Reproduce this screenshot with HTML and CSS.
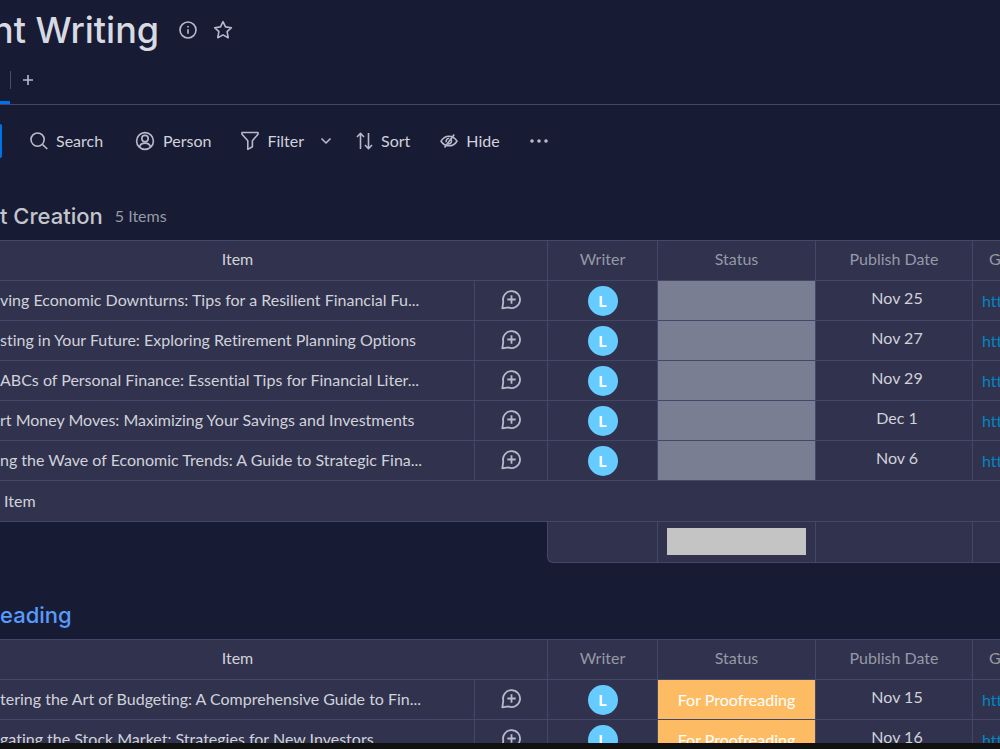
FILE: index.html
```
<!DOCTYPE html>
<html lang="en">
<head>
    <meta charset="UTF-8">
    <meta name="viewport" content="width=device-width, initial-scale=1.0">
    <title>Content Writing</title>
    <link rel="stylesheet" href="styles.css">
</head>
<body>
    <!-- Shared icons -->
    <svg class="sprite" aria-hidden="true">
        <symbol id="chat" viewBox="0 0 22 22">
            <path d="M2.300 19.300L3.300 12.600A8.500 8.500 0 1 1 8.300 18.400z" />
            <path d="M11.500 6.300v8.400M7.300 10.500h8.400" />
        </symbol>
    </svg>

    <main class="board">
        <header class="board-header">
            <h1>nt Writing</h1>
            <button class="icon-btn" aria-label="Board info">
                <svg width="18" height="18" viewBox="0 0 18 18"><circle cx="9" cy="9" r="8" /><path d="M9 8.2v4.6M9 5v1.4" /></svg>
            </button>
            <button class="icon-btn" aria-label="Add to favorites">
                <svg width="20" height="20" viewBox="0 0 20 20"><path d="M10 1.6l2.5 5.3 5.9.8-4.3 4 1.1 6L10 14.9l-5.2 2.8 1.1-6-4.3-4 5.9-.8z" /></svg>
            </button>
        </header>

        <nav class="tabs">
            <a class="tab active" href="#" aria-label="Main table"></a>
            <button class="add-view" aria-label="Add view">
                <svg width="10" height="10" viewBox="0 0 10 10"><path d="M5 0v10M0 5h10" /></svg>
            </button>
        </nav>

        <div class="toolbar">
            <button class="new-item" aria-label="New item"></button>
            <button class="tool search">
                <svg width="18" height="18" viewBox="0 0 18 18"><circle cx="7.6" cy="7.6" r="6.6" /><path d="M12.3 12.3l5 4.7" /></svg>
                Search
            </button>
            <button class="tool">
                <svg width="20" height="20" viewBox="0 0 20 20"><circle cx="10" cy="10" r="8.4" /><circle cx="10" cy="7.6" r="3.2" /><path d="M4.4 16c.8-2.6 2.8-3.9 5.6-3.9s4.8 1.3 5.6 3.9" /></svg>
                Person
            </button>
            <button class="tool filter">
                <svg width="18" height="20" viewBox="0 0 18 20"><path d="M1 1.5h16v1.8l-5.6 6.4v6l-4.6 2.700V9.700L1 3.300z" /></svg>
                Filter
            </button>
            <button class="icon-btn" aria-label="Filter options">
                <svg width="12" height="8" viewBox="0 0 12 8"><path d="M1.5 1.5L6 6l4.5-4.5" /></svg>
            </button>
            <button class="tool sort">
                <svg width="17" height="18" viewBox="0 0 17 18"><path d="M4.5 17V1.5M1 5l3.5-3.7L8 5M12.5 1v15.5M9 13l3.5 3.7L16 13" /></svg>
                Sort
            </button>
            <button class="tool">
                <svg width="18" height="16" viewBox="0 0 18 16"><path d="M1 8.2C3 5 5.8 3.2 9 3.2s6 1.8 8 5c-2 3-4.8 4.6-8 4.6s-6-1.6-8-4.6zM4.5 14.5L14.2 1.5M10.8 5.9A3 3 0 0 1 8 10.9M6.3 9.3a3 3 0 0 1 2.900-4" /></svg>
                Hide
            </button>
            <button class="icon-btn" aria-label="More actions">
                <svg class="dots" width="18" height="4" viewBox="0 0 18 4"><circle cx="2" cy="2" r="1.8" /><circle cx="9" cy="2" r="1.8" /><circle cx="16" cy="2" r="1.8" /></svg>
            </button>
        </div>

        <section class="group">
            <div class="group-title">
                <h2>t Creation</h2>
                <span>5 Items</span>
            </div>
            <table>
                <colgroup>
                    <col><col class="col-chat"><col class="col-writer"><col class="col-status"><col class="col-date"><col class="col-link">
                </colgroup>
                <thead>
                    <tr>
                        <th class="item-head">Item</th>
                        <th class="chat-head"></th>
                        <th>Writer</th>
                        <th>Status</th>
                        <th>Publish Date</th>
                        <th class="link-head">G</th>
                    </tr>
                </thead>
                <tbody>
                    <tr>
                        <td class="name">ving Economic Downturns: Tips for a Resilient Financial Fu...</td>
                        <td class="updates"><button class="chat" aria-label="Add update"><svg><use href="#chat" /></svg></button></td>
                        <td><span class="avatar">L</span></td>
                        <td class="empty"></td>
                        <td class="date">Nov 25</td>
                        <td class="link"><a href="#">htt</a></td>
                    </tr>
                    <tr>
                        <td class="name">sting in Your Future: Exploring Retirement Planning Options</td>
                        <td class="updates"><button class="chat" aria-label="Add update"><svg><use href="#chat" /></svg></button></td>
                        <td><span class="avatar">L</span></td>
                        <td class="empty"></td>
                        <td class="date">Nov 27</td>
                        <td class="link"><a href="#">htt</a></td>
                    </tr>
                    <tr>
                        <td class="name">ABCs of Personal Finance: Essential Tips for Financial Liter...</td>
                        <td class="updates"><button class="chat" aria-label="Add update"><svg><use href="#chat" /></svg></button></td>
                        <td><span class="avatar">L</span></td>
                        <td class="empty"></td>
                        <td class="date">Nov 29</td>
                        <td class="link"><a href="#">htt</a></td>
                    </tr>
                    <tr>
                        <td class="name">rt Money Moves: Maximizing Your Savings and Investments</td>
                        <td class="updates"><button class="chat" aria-label="Add update"><svg><use href="#chat" /></svg></button></td>
                        <td><span class="avatar">L</span></td>
                        <td class="empty"></td>
                        <td class="date">Dec 1</td>
                        <td class="link"><a href="#">htt</a></td>
                    </tr>
                    <tr>
                        <td class="name">ng the Wave of Economic Trends: A Guide to Strategic Fina...</td>
                        <td class="updates"><button class="chat" aria-label="Add update"><svg><use href="#chat" /></svg></button></td>
                        <td><span class="avatar">L</span></td>
                        <td class="empty"></td>
                        <td class="date">Nov 6</td>
                        <td class="link"><a href="#">htt</a></td>
                    </tr>
                    <tr class="add-row">
                        <td colspan="6"><button class="add-item">Item</button></td>
                    </tr>
                </tbody>
            </table>
            <div class="summary">
                <div></div>
                <div class="summary-status"><span></span></div>
                <div></div>
                <div></div>
            </div>
        </section>

        <section class="group proofreading">
            <div class="group-title">
                <h2>eading</h2>
            </div>
            <table>
                <colgroup>
                    <col><col class="col-chat"><col class="col-writer"><col class="col-status"><col class="col-date"><col class="col-link">
                </colgroup>
                <thead>
                    <tr>
                        <th class="item-head">Item</th>
                        <th class="chat-head"></th>
                        <th>Writer</th>
                        <th>Status</th>
                        <th>Publish Date</th>
                        <th class="link-head">G</th>
                    </tr>
                </thead>
                <tbody>
                    <tr>
                        <td class="name">tering the Art of Budgeting: A Comprehensive Guide to Fin...</td>
                        <td class="updates"><button class="chat" aria-label="Add update"><svg><use href="#chat" /></svg></button></td>
                        <td><span class="avatar">L</span></td>
                        <td class="proof">For Proofreading</td>
                        <td class="date">Nov 15</td>
                        <td class="link"><a href="#">htt</a></td>
                    </tr>
                    <tr>
                        <td class="name">gating the Stock Market: Strategies for New Investors</td>
                        <td class="updates"><button class="chat" aria-label="Add update"><svg><use href="#chat" /></svg></button></td>
                        <td><span class="avatar">L</span></td>
                        <td class="proof">For Proofreading</td>
                        <td class="date">Nov 16</td>
                        <td class="link"><a href="#">htt</a></td>
                    </tr>
                </tbody>
            </table>
        </section>
    </main>
    <footer class="bottom-bar"></footer>
</body>
</html>
```
FILE: styles.css
```
* {
    margin: 0;
    padding: 0;
    box-sizing: border-box;
}

body {
    font-family: Lato, sans-serif;
    font-size: 16px;
    line-height: 20px;
    font-variant-ligatures: none;
    color: #d0d2da;
    background: #181b34;
    height: 100vh;
    display: flex;
    flex-direction: column;
    overflow: hidden;
}

button {
    font: inherit;
    font-variant-ligatures: none;
    color: inherit;
    background: none;
    border: none;
    cursor: pointer;
}

svg {
    display: block;
    fill: none;
    stroke: #b8bacb;
    stroke-width: 1.6;
    stroke-linejoin: round;
}

.sprite {
    position: absolute;
    width: 0;
    height: 0;
}

.board {
    flex: 1;
    min-height: 0;
    overflow: hidden;
}

.bottom-bar {
    height: 6px;
    background: #111111;
}

.board-header {
    display: flex;
    align-items: center;
    gap: 16px;
    height: 59px;
}

h1 {
    font-family: Inter, sans-serif;
    font-size: 36px;
    font-weight: 500;
    line-height: 60px;
    color: #d8dae2;
    margin-left: -8px;
    margin-right: 4px;
}

.tabs {
    display: flex;
    height: 46px;
    border-bottom: 1px solid #44466a;
}

.tab {
    width: 10px;
}

.tab.active {
    border-bottom: 3px solid #0073ea;
}

.add-view {
    height: 18px;
    margin-top: 12px;
    padding-left: 12px;
    border-left: 1px solid #4b4e69;
}

.toolbar {
    display: flex;
    align-items: center;
    height: 71px;
}

.new-item {
    width: 2px;
    height: 34px;
    margin-right: 28px;
    background: #0073ea;
    border-radius: 0 2px 2px 0;
}

.tool {
    display: flex;
    align-items: center;
    gap: 8px;
    margin-right: 30px;
}

.tool.search {
    margin-right: 32px;
}

.tool.filter {
    margin-right: 16px;
}

.tool.sort {
    margin-left: 24px;
}

.dots {
    fill: #b8bacb;
    stroke: none;
}

.group-title {
    display: flex;
    align-items: center;
    gap: 12px;
    height: 48px;
    margin-top: 16px;
    color: #9699a6;
}

h2 {
    font-family: Inter, sans-serif;
    font-size: 22px;
    font-weight: 500;
    line-height: 24px;
    color: #c3c6cc;
}

.proofreading h2 {
    color: #579bfc;
}

.proofreading .group-title {
    margin-top: 28px;
}

table {
    width: 100%;
    table-layout: fixed;
    border-collapse: separate;
    border-spacing: 0;
    background: #30324e;
    border-top: 1px solid #44466a;
}

.col-chat {
    width: 73px;
}

.col-writer {
    width: 110px;
}

.col-status {
    width: 158px;
}

.col-date {
    width: 157px;
}

.col-link {
    width: 27px;
}

th,
td {
    height: 40px;
    border-bottom: 1px solid #44466a;
    border-right: 1px solid #44466a;
    text-align: center;
    vertical-align: middle;
    white-space: nowrap;
    overflow: hidden;
}

th {
    padding-bottom: 4px;
    font-weight: 400;
    color: #9699a6;
}

th.item-head {
    color: #d0d2da;
    border-right: none;
}

th.link-head {
    padding-left: 16px;
    text-align: left;
}

td.name {
    padding-bottom: 2px;
    text-align: left;
}

td.updates {
    padding-bottom: 2px;
}

.chat {
    display: block;
    margin: 0 auto;
}

.chat svg {
    width: 22px;
    height: 22px;
    stroke-width: 1.8;
}

.avatar {
    display: block;
    width: 30px;
    height: 30px;
    margin: 0 auto;
    border-radius: 50%;
    background: #66ccff;
    color: #ffffff;
    font-weight: 700;
    line-height: 30px;
}

td.empty {
    background: #797e93;
}

td.proof {
    background: #fdbc64;
    color: #ffffff;
}

td.date {
    padding: 0 0 6px 6px;
}

td.link {
    padding-left: 9px;
    text-align: left;
}

td:last-child,
th:last-child {
    border-right: none;
}

td.link a {
    color: #0086c0;
    text-decoration: none;
}

.add-row td {
    height: 41px;
    text-align: left;
}

.add-item {
    padding-left: 4px;
}

.summary {
    display: grid;
    grid-template-columns: 110px 158px 157px 27px;
    width: 453px;
    height: 41px;
    margin-left: auto;
    background: #30324e;
    border-left: 1px solid #44466a;
    border-bottom: 1px solid #44466a;
    border-radius: 0 0 0 6px;
}

.summary div {
    border-right: 1px solid #44466a;
}

.summary div:last-child {
    border-right: none;
}

.summary-status {
    padding: 6px 9px;
}

.summary-status span {
    display: block;
    height: 27px;
    background: #c4c4c4;
}
```
